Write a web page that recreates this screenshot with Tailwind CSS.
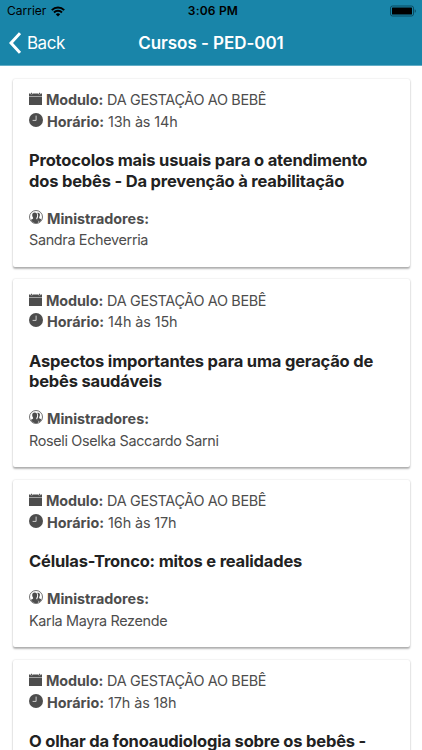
<!DOCTYPE html>
<html lang="pt-BR" class="h-full">
<head>
    <meta charset="UTF-8">
    <meta name="viewport" content="width=device-width, initial-scale=1.0">
    <title>Cursos - PED-001</title>
    <script src="https://cdn.jsdelivr.net/npm/@tailwindcss/browser@4"></script>
</head>
<body class="h-full overflow-hidden bg-white font-['Inter',sans-serif] text-[#4d4d4d]">
    <!-- icons shared by the cards -->
    <svg class="hidden">
        <symbol id="calendar" viewBox="0 0 14 14">
            <path d="M0 1.7h1.7v.8h2v-.8h6.6v.8h2v-.8H14v2.5H0zM0 4.9h14V14H0z"/>
            <path d="M2.2.7h1v1.4h-1zM10.8.7h1v1.4h-1z"/>
        </symbol>
        <symbol id="clock" viewBox="0 0 14 14">
            <circle cx="7" cy="7" r="7"/>
            <path d="M7.1 2.6v4.8H3.6" fill="none" stroke="#ddd" stroke-width=".9"/>
        </symbol>
        <symbol id="contacts" viewBox="0 0 14 14">
            <circle cx="7" cy="7" r="6.5" fill="none" stroke="currentColor" stroke-width=".8"/>
            <path d="M8.1 2.9c1.7-.7 3 .3 2.8 2.1-.1 1.1-.5 1.6-.7 2.2-.2.8.1 1.2 1 1.6l1.3.6A6 6 0 0 1 9.6 12.4c-.1-1.7-.5-2.3-1.9-2.9.7-.8 1.3-2 1.4-3.6.1-1.4-.2-2.3-1-3z"/>
            <path d="M5.7 2.5c1.7 0 2.6 1.2 2.5 2.9-.1 1.3-.5 1.8-.8 2.5-.3.9 0 1.3.8 1.7.8.3.9 1.3.9 3.1A6 6 0 0 1 1.7 9.8l1.4-.6c1-.4 1.2-.8.9-1.6-.3-.6-.7-1.1-.8-2.3-.1-1.7.8-2.8 2.5-2.8z"/>
        </symbol>
    </svg>

    <header class="h-[66px] border-b border-[#62adc6] bg-[#1985a9]">
        <div class="grid h-[22px] grid-cols-3 items-center pl-[7px] pr-[5px] text-[12px] text-black">
            <div class="flex items-center gap-[5px]">
                <span>Carrier</span>
                <svg class="h-[11px] w-[14px]" viewBox="0 0 14 11" fill="none" stroke="currentColor" stroke-width="2">
                    <path d="M.8 4.1a8.8 8.8 0 0 1 12.4 0"/>
                    <path d="M3 6.5a5.7 5.7 0 0 1 8 0"/>
                    <path d="M4.8 8.3a3.2 3.2 0 0 1 4.4 0L7 10.6z" fill="currentColor" stroke="none"/>
                </svg>
            </div>
            <div class="pl-[2px] text-center font-semibold tracking-[0.2px]">3:06 PM</div>
            <svg class="h-[12px] w-[28px] justify-self-end" viewBox="0 0 28 12">
                <rect x="1.5" y="1" width="23" height="10" rx="2" fill="none" stroke="#0b4a60"/>
                <rect x="3" y="2.5" width="20" height="7" rx=".5" fill="#000"/>
                <path d="M25.7 4.2c1.5.5 1.5 3.1 0 3.6z" fill="#0b4a60"/>
            </svg>
        </div>
        <div class="grid h-[43px] grid-cols-[1fr_auto_1fr] items-center text-white">
            <button type="button" class="flex items-center gap-[6px] pl-[9px] text-[17px]">
                <svg class="mb-[2px] h-[22px] w-[12px]" viewBox="0 0 12 22" fill="none" stroke="currentColor" stroke-width="3">
                    <path d="M11 1.2 2 11l9 9.8"/>
                </svg>
                <span class="tracking-[-0.5px]">Back</span>
            </button>
            <h1 class="text-[17px] font-semibold tracking-[-0.05px]">Cursos - PED-001</h1>
        </div>
    </header>

    <main id="courses" class="flex flex-col gap-[12.5px] px-[12.5px] pt-[12.5px]"></main>

    <script>
        const courses = [
            { time: '13h às 14h', title: 'Protocolos mais usuais para o atendimento<br>dos bebês - Da prevenção à reabilitação', speaker: 'Sandra Echeverria' },
            { time: '14h às 15h', title: 'Aspectos importantes para uma geração de<br>bebês saudáveis', speaker: 'Roseli Oselka Saccardo Sarni' },
            { time: '16h às 17h', title: 'Células-Tronco: mitos e realidades', speaker: 'Karla Mayra Rezende' },
            { time: '17h às 18h', title: 'O olhar da fonoaudiologia sobre os bebês -', speaker: '' },
        ];

        document.getElementById('courses').innerHTML = courses.map((course) => `
            <article class="shrink-0 rounded-[2px] bg-white px-[16.5px] pt-[10.5px] pb-[16px] text-[14.4px] leading-[21.5px] shadow-[0_1.5px_2px_rgba(0,0,0,0.25),0_0.5px_2px_rgba(0,0,0,0.12)]">
                <div class="flex items-center">
                    <svg class="mr-[4px] mb-[2px] size-[13px] fill-current"><use href="#calendar"/></svg>
                    <strong class="mr-[4px] tracking-[-0.1px]">Modulo:</strong>
                    <span class="tracking-[-0.33px]">DA GESTAÇÃO AO BEBÊ</span>
                </div>
                <div class="flex items-center">
                    <svg class="mr-[4px] mb-[3px] size-[14px] fill-current"><use href="#clock"/></svg>
                    <strong class="mr-[4px]">Horário:</strong>
                    <span class="tracking-[-0.12px]">${course.time}</span>
                </div>
                <h2 class="mt-[18px] mb-[16.5px] whitespace-nowrap text-[16.5px] leading-[20.5px] font-bold tracking-[-0.18px] text-[#222]">${course.title}</h2>
                <div class="flex items-center">
                    <svg class="mr-[4px] mb-[3px] size-[14px] fill-current"><use href="#contacts"/></svg>
                    <strong class="tracking-[-0.03px]">Ministradores:</strong>
                </div>
                <div class="tracking-[-0.33px]">${course.speaker}</div>
            </article>`).join('');
    </script>
</body>
</html>
